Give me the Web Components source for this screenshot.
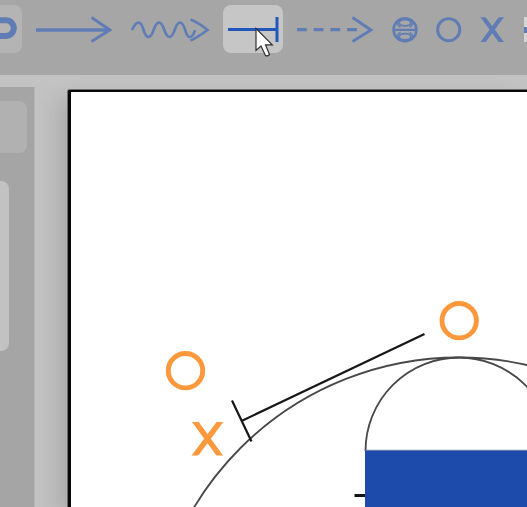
<!DOCTYPE html>
<html lang="en"><head><meta charset="utf-8"><title>Play designer</title>
<style>html,body{margin:0;height:100%;overflow:hidden;font-family:"Liberation Sans",Arial,sans-serif}</style></head>
<body><play-designer></play-designer>
<script>
const define=(name,html)=>{
  const t=document.createElement('template');t.innerHTML=html;
  customElements.define(name,class extends HTMLElement{
    constructor(){super();this.attachShadow({mode:'open'}).append(t.content.cloneNode(true));}
  });
};

define('tool-button',`<style>
:host{display:flex;align-items:center;height:48px;border-radius:8px;flex:none;color:#5f7cb5;box-sizing:border-box}
:host([tile]){background:#b4b4b4}
:host([active]){background:#c6c6c6;color:#2157bb}
::slotted(svg){display:block;overflow:visible;fill:none;stroke:currentColor}
</style><slot></slot>`);

define('tool-bar',`<style>
:host{display:flex;height:75px;padding-top:5px;box-sizing:border-box;background:#a6a6a6;overflow:hidden;position:relative}
tool-button.tile{border-radius:0 8px 8px 0}
.pointer{position:absolute;left:254px;top:27px}
</style>
<tool-button tile class="tile" style="width:22px"><svg width="22" height="48"><path stroke-width="6" d="M-5 15.300H6A7.800 7.800 0 0 1 6 30.900H-5"/></svg></tool-button>
<tool-button style="width:76px;margin-left:14px"><svg width="76" height="48"><path stroke-width="3.300" d="M0 25H74"/><path stroke-width="2.800" d="M55.500 12.500L74 25L55.500 36.500"/></svg></tool-button>
<tool-button style="width:78px;margin-left:19px"><svg width="78" height="48"><path stroke-width="2.600" d="M1 25C3.500 19.500 5.500 17.500 7.500 17.500C13 17.500 12 32 17.500 32C23 32 22.500 17.500 28 17.500C33.500 17.500 33 32 38.500 32C44 32 43.500 17.500 49 17.500C54.500 17.500 54 32 58.500 32C61.500 32 63 29 64 25"/><path stroke-width="2.600" d="M59.500 14.500C65 16.500 71 20.500 76.500 25C71 29 65.500 33 59.500 35.500"/></svg></tool-button>
<tool-button active style="width:60px;margin-left:14px"><svg width="60" height="48"><path stroke-width="3" d="M5 24.600H54M54 12V37"/></svg></tool-button>
<tool-button style="width:76px;margin-left:14px"><svg width="76" height="48"><path stroke-width="3.200" d="M0 24.700H60" stroke-dasharray="9.800 6.900"/><path stroke-width="2.800" d="M55.500 12.500L74 25L55.500 36.500"/></svg></tool-button>
<tool-button style="width:26px;margin-left:19px"><svg width="26" height="48"><circle cx="13" cy="24.700" r="11.400" stroke-width="2.600"/><g stroke-width="1.800"><path d="M1.500 24.900H24.500" stroke-width="2.200"/><ellipse cx="13" cy="17.700" rx="5.800" ry="3.100"/><ellipse cx="13" cy="31.800" rx="5.800" ry="3.100"/><path stroke-width="1.500" d="M5 17.500Q6 21 8.500 22.200M21 17.500Q20 21 17.500 22.200M5 32Q6 28.500 8.500 27.300M21 32Q20 28.500 17.500 27.300"/></g></svg></tool-button>
<tool-button style="width:26px;margin-left:18px"><svg width="26" height="48"><circle cx="12.700" cy="24.700" r="11.100" stroke-width="2.900"/></svg></tool-button>
<tool-button style="width:25px;margin-left:18px"><svg width="25" height="48"><clipPath id="x"><rect y="12.300" width="25" height="24.700"/></clipPath><g clip-path="url(#x)" stroke-width="4.200"><path d="M.2 8.300L24.200 41M24.200 8.300L.2 41"/></g></svg></tool-button>
<tool-button style="width:20px;margin-left:19px"><svg width="20" height="48"><path d="M0 12H20V37H0z" fill="#d5d5d5" stroke="none"/><path d="M0 25H20" stroke-width="6"/></svg></tool-button>
<svg class="pointer" width="22" height="32"><path d="M2 1.500V23.500L7 19L11.300 28.200Q13 29.800 15.500 27.500L11.500 17.800H18.300Z" fill="#fff" stroke="#303030" stroke-width="1.200"/></svg>`);

define('side-panel',`<style>
:host{display:flex;flex-direction:column;gap:28px;width:35px;margin-top:12px;padding-top:14px;box-sizing:border-box;background:#a5a5a5;border-right:1px solid #b4b4b4;flex:none}
div{background:#b1b1b1;width:26.500px;height:52px;border-radius:0 8px 8px 0}
div+div{background:#c2c2c2;width:9.300px;height:170px}
</style><div></div><div></div>`);

define('play-field',`<style>
:host{display:block;flex:1;min-width:0;margin:15px 0 0 33px;border:solid #080808;border-width:2px 0 0 3px;border-radius:2px 0 0 0;background:#fff;box-shadow:0 0 0 1px #6b6b6b,-10px 9px 22px rgba(0,0,0,.12);overflow:hidden}
svg{display:block;fill:none}
</style>
<svg width="456" height="415" viewBox="71 92 456 415">
<g stroke="#484848" stroke-width="1.800"><circle cx="459" cy="666.500" r="309"/><path d="M365.500 451A93.500 93.500 0 0 1 552.500 451"/></g>
<rect x="365" y="450.500" width="170" height="70" fill="#1c4bac"/><path d="M365 450.300H528" stroke="#56709f" stroke-width="1"/>
<path d="M354.500 495.500H365" stroke="#151515" stroke-width="3"/>
<path d="M424.500 334L241.500 421M232 400.500L251.500 441.500" stroke="#171717" stroke-width="2.200"/>
<g stroke="#fd983d"><g stroke-width="4.900"><circle cx="185.500" cy="370.700" r="17.200"/><circle cx="459.200" cy="320.700" r="17.200"/></g>
<clipPath id="m"><rect x="190" y="422" width="35" height="33.500"/></clipPath><g clip-path="url(#m)" stroke-width="5.400"><path d="M192.500 418L222.600 459.500M222.900 418L192 459.500"/></g></g>
</svg>`);

define('play-designer',`<style>
:host{display:flex;flex-direction:column;height:100vh;overflow:hidden;background:#c2c2c2}
main{display:flex;flex:1;min-height:0;background:#c2c2c2}
</style><tool-bar></tool-bar><main><side-panel></side-panel><play-field></play-field></main>`);
</script></body></html>
